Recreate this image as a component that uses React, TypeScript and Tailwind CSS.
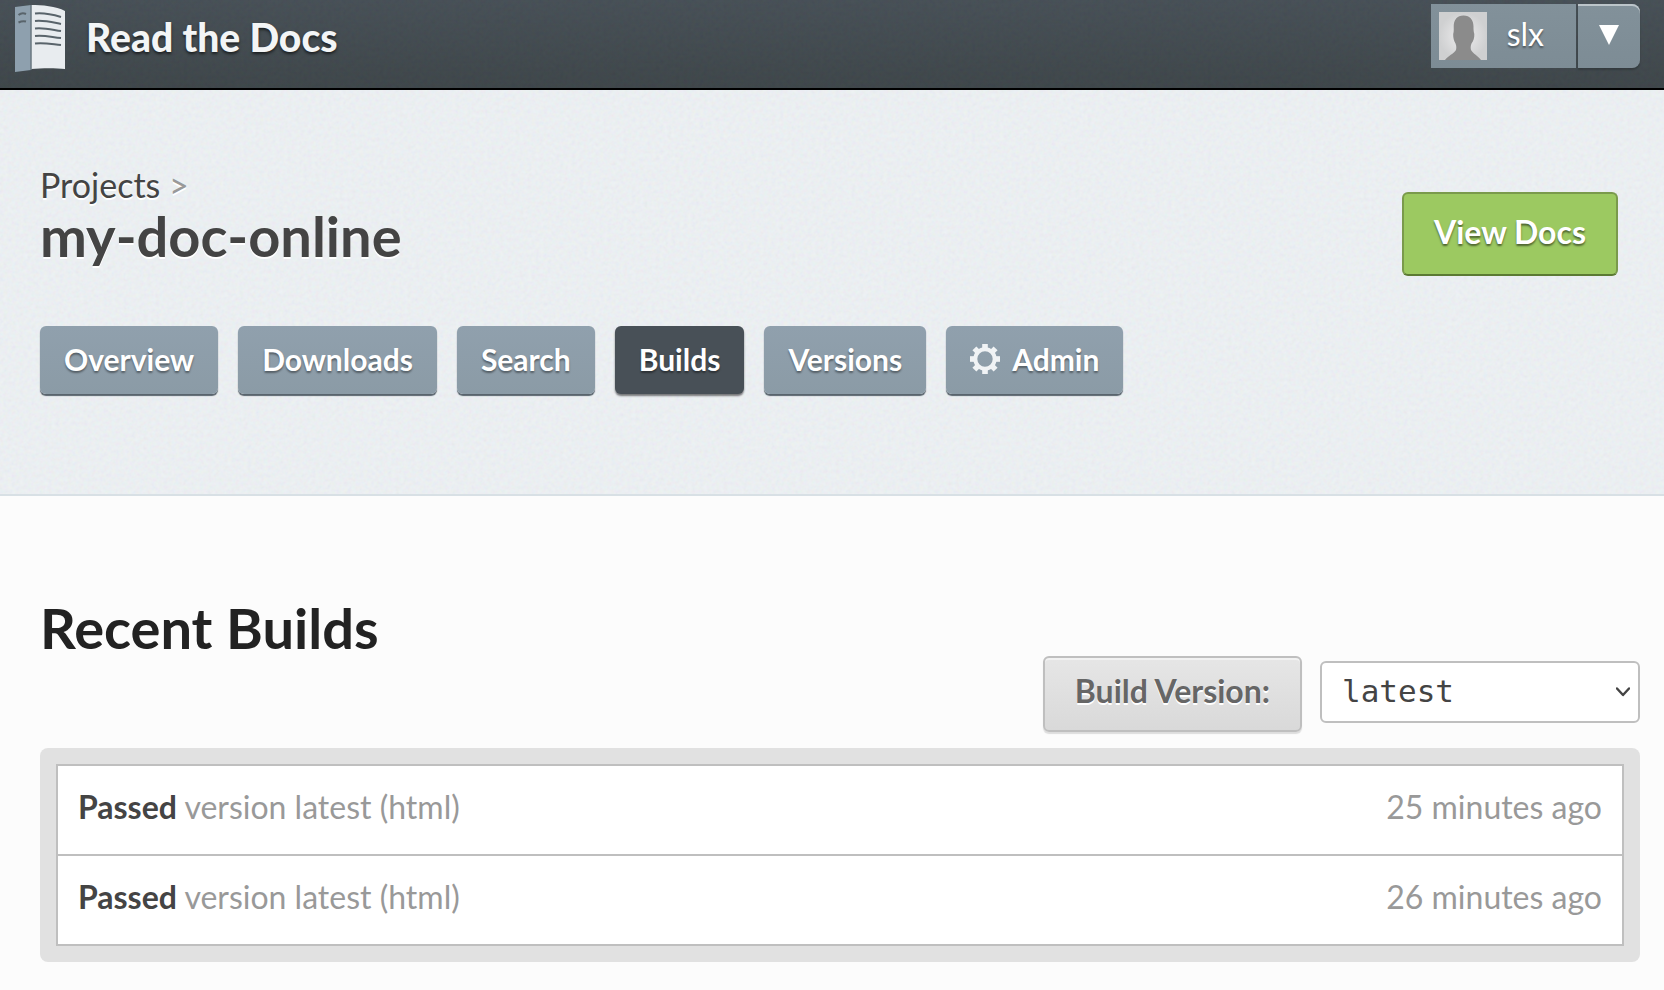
import { ReactNode } from 'react';

const builds = [
  { id: 2, state: 'Passed', detail: 'version latest (html)', when: '25 minutes ago' },
  { id: 1, state: 'Passed', detail: 'version latest (html)', when: '26 minutes ago' },
];

const tabs = ['Overview', 'Downloads', 'Search', 'Builds', 'Versions', 'Admin'];

function Grain({ id, className }: { id: string; className: string }) {
  return (
    <svg aria-hidden="true" className={`pointer-events-none absolute inset-0 h-full w-full ${className}`}>
      <filter id={id} x="0" y="0" width="100%" height="100%">
        <feTurbulence type="fractalNoise" baseFrequency="0.25" numOctaves="2" stitchTiles="stitch" />
        <feColorMatrix values="1 0 0 0 0  0 1 0 0 0  0 0 1 0 0  0 0 0 0 1" />
      </filter>
      <rect width="100%" height="100%" filter={`url(#${id})`} />
    </svg>
  );
}

function BookLogo() {
  return (
    <svg width="54" height="70" viewBox="0 0 54 70" aria-hidden="true">
      <path d="M1 3L17 1V66L1 68Z" fill="#8ea0ae" />
      <path d="M17 1C28 1 42 2 51 7V65C42 64 28 64 17 65Z" fill="#e8ecef" />
      <path d="M17 1V66" stroke="#69777f" strokeWidth="1.500" />
      <g fill="none" stroke="#59646b" strokeWidth="2">
        <path d="M4.500 11q3.500-3 7.500-1M4.500 18.500q4-2 7.500-1" />
        <path d="M21 9.500C30 8.500 37 10 47 13M21 17C30 16 37 18 47 20M21 24.500C30 23.500 37 25.500 47 27M21 32C30 31 37 33 47 34M21 39.500C30 38.500 37 40 47 41" />
      </g>
    </svg>
  );
}

function Avatar() {
  return (
    <svg width="48" height="48" viewBox="0 0 48 48" aria-hidden="true">
      <defs>
        <radialGradient id="avatar-bg">
          <stop offset="0.4" stopColor="#e2e2e3" />
          <stop offset="1" stopColor="#cfd0d1" />
        </radialGradient>
      </defs>
      <rect width="48" height="48" fill="url(#avatar-bg)" />
      <path
        d="M24.500 3.500C31 3.500 34.500 8 34.500 14.500C34.500 17 34.500 19 35.300 22C35.500 26 34.500 29 32.500 31.500C31.500 34 31.500 36 32 38C34 41.500 39 44 42 48H6C9 44 15 41.500 17 38C17.500 36 17.500 34 16.500 31.500C15 29 14 26 14.200 22C15 19 14.700 17 14.700 14.500C14.700 8 18 3.500 24.500 3.500Z"
        fill="#8b8b8b"
      />
    </svg>
  );
}

function GearIcon() {
  const teeth = [0, 45, 90, 135, 180, 225, 270, 315];
  return (
    <svg width="30" height="30" viewBox="0 0 30 30" aria-hidden="true" className="shrink-0">
      <circle cx="15" cy="15" r="9.700" fill="none" stroke="#f0f3f5" strokeWidth="4" />
      {teeth.map((a) => (
        <rect key={a} x="12.200" y="0" width="5.600" height="6" fill="#f0f3f5" transform={`rotate(${a} 15 15)`} />
      ))}
    </svg>
  );
}

function Tab({ active, children }: { active: boolean; children: ReactNode }) {
  return (
    <a
      href="#"
      aria-current={active ? 'page' : undefined}
      className={`flex h-[68px] items-center gap-3 rounded-md px-6 pb-[2px] text-[30px] leading-9 font-bold text-white [text-shadow:0_2px_2px_rgba(0,0,0,0.4)] ${
        active
          ? 'bg-[#485057] shadow-[0_2px_2px_rgba(0,0,0,0.5)]'
          : 'bg-linear-to-b from-[#90a0ad] to-[#8b9ba6] shadow-[0_2px_1px_#59646d]'
      }`}
    >
      {children}
    </a>
  );
}

export default function App() {
  return (
    <div className="min-h-screen bg-[#fcfcfc] font-['Lato',sans-serif] text-[#444]">
      <header className="relative flex h-[90px] items-start justify-between border-b-2 border-black bg-linear-to-b from-[#434c53] to-[#3a4246] pr-6 pl-[14px]">
        <Grain id="grain-header" className="opacity-[0.04]" />
        <a href="#" className="relative flex items-start gap-[18px] pt-1">
          <BookLogo />
          <span className="pt-2 text-[39px] leading-[50px] font-black text-[#f3f5f6] [text-shadow:0_2px_3px_rgba(0,0,0,0.6)]">
            Read the Docs
          </span>
        </a>
        <div className="relative flex gap-[2px] pt-1 text-white">
          <a
            href="#"
            className="flex h-16 items-center gap-5 bg-linear-to-b from-[#82919a] to-[#7d8c95] pr-8 pl-2 text-[32px] leading-10 [text-shadow:0_2px_2px_rgba(0,0,0,0.4)]"
          >
            <Avatar />
            <span className="pb-1">slx</span>
          </a>
          <button
            type="button"
            aria-label="Account menu"
            className="flex h-16 w-[62px] items-center justify-center rounded-r-lg bg-linear-to-b from-[#82919a] to-[#7d8c95] pb-[2px] shadow-[inset_0_2px_0_#bcc5ca,0_2px_2px_rgba(0,0,0,0.2)]"
          >
            <svg width="20" height="20" viewBox="0 0 20 20" aria-hidden="true">
              <path d="M0 0H20L10 20Z" fill="#fff" />
            </svg>
          </button>
        </div>
      </header>

      <section className="relative border-b-2 border-[#d8e0e5] bg-[#eff3f6] pt-[74px] pb-[100px] pl-10">
        <Grain id="grain-hero" className="opacity-[0.07]" />
        <div className="relative flex items-start justify-between pr-[46px]">
          <h1 className="[text-shadow:0_2px_0_#fff]">
            <span className="block text-[34px] leading-[42px]">
              <a href="#">Projects</a> <span className="text-[#999]">&gt;</span>
            </span>
            <a href="#" className="block text-[56px] leading-[60px] font-bold">
              my-doc-online
            </a>
          </h1>
          <a
            href="#"
            className="mt-7 flex h-[84px] items-center rounded-md border-2 border-[#7a9a4c] border-b-[#5b7a33] bg-[#9cc961] px-[30px] pb-1 text-[32px] leading-10 font-bold text-white [text-shadow:0_2px_2px_rgba(0,0,0,0.5)]"
          >
            View Docs
          </a>
        </div>
        <nav aria-label="Project" className="relative mt-[50px] flex gap-5">
          {tabs.map((t) => (
            <Tab key={t} active={t === 'Builds'}>
              {t === 'Admin' && <GearIcon />}
              {t}
            </Tab>
          ))}
        </nav>
      </section>

      <main className="relative px-10 pt-[100px] pr-6 pb-7">
        <h2 className="text-[56px] leading-[64px] font-bold text-[#222]">Recent Builds</h2>
        <form className="-mt-1 flex items-center justify-end gap-[18px]" onSubmit={(e) => e.preventDefault()}>
          <button
            type="submit"
            className="h-[76px] rounded-md border-2 border-[#bfbfbf] bg-linear-to-b from-[#e6e6e6] to-[#d9d9d9] px-[30px] pb-[6px] text-[32px] leading-10 font-bold text-[#666] shadow-[inset_0_2px_0_#f2f2f2,0_2px_1px_#ddd] [text-shadow:0_2px_0_#fff]"
          >
            Build Version:
          </button>
          <span className="relative mb-1 flex items-center">
            <select
              aria-label="Version"
              defaultValue="latest"
              className="h-[62px] w-[320px] appearance-none rounded-md border-2 border-[#bfbfbf] bg-white pb-[2px] pl-5 font-['DejaVu_Sans_Mono',monospace] text-[31px] text-[#444]"
            >
              <option>latest</option>
            </select>
            <svg width="14" height="10" viewBox="0 0 14 10" aria-hidden="true" className="pointer-events-none absolute right-[10px]">
              <path d="M1 1.500L7 8L13 1.500" fill="none" stroke="#444" strokeWidth="2.400" strokeLinecap="round" strokeLinejoin="round" />
            </svg>
          </span>
        </form>
        <div className="mt-4 rounded-lg bg-[#e1e1e1] p-4">
          <ul className="divide-y-2 divide-[#bfbfbf] border-2 border-[#bfbfbf] bg-white">
            {builds.map((b) => (
              <li key={b.id}>
                <a href="#" className="flex h-[88px] justify-between px-5 pt-[21px] text-[32px] leading-10 text-[#999]">
                  <span>
                    <strong className="font-bold text-[#444]">{b.state}</strong> {b.detail}
                  </span>
                  <span>{b.when}</span>
                </a>
              </li>
            ))}
          </ul>
        </div>
      </main>
    </div>
  );
}
